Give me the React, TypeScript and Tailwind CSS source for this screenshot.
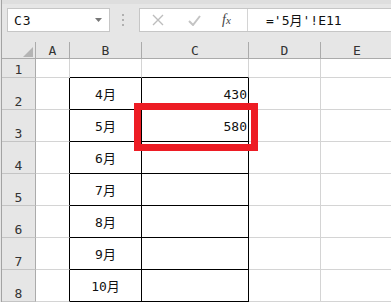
import React from "react";

const F = "font-['DejaVu_Sans_Mono','Noto_Sans_CJK_JP',monospace]";

const rows = [
  { n: "1", h: "h-[19px]", b: "", c: "" },
  { n: "2", h: "h-[32px]", b: "4月", c: "430" },
  { n: "3", h: "h-[32px]", b: "5月", c: "580" },
  { n: "4", h: "h-[32px]", b: "6月", c: "" },
  { n: "5", h: "h-[32px]", b: "7月", c: "" },
  { n: "6", h: "h-[32px]", b: "8月", c: "" },
  { n: "7", h: "h-[32px]", b: "9月", c: "" },
  { n: "8", h: "h-[32px]", b: "10月", c: "" },
];

export default function App() {
  return (
    <div className={`relative w-[391px] h-[302px] overflow-hidden bg-[#e6e6e6] pl-px ${F} text-[13px] text-[#111]`}>
      <div className="h-full border-l border-[#a3a3a3] flex flex-col">
        {/* toolbar */}
        <div className="h-[42px] shrink-0 border-t-[4px] border-[#dedede] flex items-start pt-[4px]">
          <div className="ml-[5px] w-[103px] h-[24px] border border-[#c6c6c6] bg-white flex items-center justify-between pl-[6px] pr-[7px]">
            <span className="leading-none tracking-[1px]">C3</span>
            <svg width="7" height="4" viewBox="0 0 7 4">
              <polygon points="0,0 7,0 3.5,4" fill="#777" />
            </svg>
          </div>
          <div className="ml-[12px] mt-[6px] flex flex-col gap-[3px]">
            <div className="w-[2px] h-[2px] bg-[#b0b0b0]" />
            <div className="w-[2px] h-[2px] bg-[#b0b0b0]" />
            <div className="w-[2px] h-[2px] bg-[#b0b0b0]" />
          </div>
          <div className="ml-[15px] flex-1 h-[24px] border border-r-0 border-[#c6c6c6] bg-white flex items-center">
            <div className="w-[107px] h-full flex items-center">
              <svg className="ml-[12px]" width="12" height="12" viewBox="0 0 12 12">
                <path d="M1 1 L11 11 M11 1 L1 11" stroke="#bdbdbd" strokeWidth="1.4" fill="none" />
              </svg>
              <svg className="ml-[24px]" width="13" height="11" viewBox="0 0 13 11">
                <path d="M1 6 L5 10 L12 1" stroke="#c4c4c4" strokeWidth="2" fill="none" />
              </svg>
              <span className="ml-[21px] font-['Liberation_Serif',serif] italic text-[14px] leading-none text-[#444]">
                f<span className="text-[11px]">x</span>
              </span>
            </div>
            <div className="w-px h-full bg-[#d4d4d4]" />
            <span className="pl-[18px] leading-none whitespace-nowrap">='5月'!E11</span>
          </div>
        </div>

        {/* header row */}
        <div className="flex h-[17px] shrink-0 border-b border-[#ababab] bg-[#e6e6e6] text-[#333]">
          <div className="relative w-[34px] shrink-0 border-r border-[#ababab]">
            <svg className="absolute right-[2px] bottom-[1px]" width="10" height="10" viewBox="0 0 10 10">
              <polygon points="0,10 10,10 10,0" fill="#b4b4b4" />
            </svg>
          </div>
          <div className="w-[34px] shrink-0 border-r border-[#ababab] flex items-center justify-center leading-none">A</div>
          <div className="w-[72px] shrink-0 border-r border-[#ababab] flex items-center justify-center leading-none">B</div>
          <div className="w-[107px] shrink-0 border-r border-[#ababab] flex items-center justify-center leading-none">C</div>
          <div className="w-[72px] shrink-0 border-r border-[#ababab] flex items-center justify-center leading-none">D</div>
          <div className="w-[72px] shrink-0 flex items-center justify-center leading-none">E</div>
        </div>

        {/* rows */}
        {rows.map((r, i) => {
          const first = i === 0;
          return (
            <div key={r.n} className={`flex ${r.h} shrink-0 bg-white`}>
              <div className="w-[34px] shrink-0 bg-[#e6e6e6] border-r border-b border-r-[#ababab] border-b-[#c4c4c4] flex items-end justify-center pb-[1px] text-[#333] leading-none">
                {r.n}
              </div>
              <div className={`w-[34px] shrink-0 border-b border-r border-b-[#d4d4d4] ${first ? "border-r-[#d4d4d4]" : "border-r-black"}`} />
              <div className={`w-[72px] shrink-0 border-b border-r flex items-center justify-center pt-[2px] leading-none ${first ? "border-b-black border-r-[#d4d4d4]" : "border-black"}`}>
                {r.b}
              </div>
              <div className={`w-[107px] shrink-0 border-b border-r flex items-center justify-end pt-[2px] pr-[1px] leading-none ${first ? "border-b-black border-r-[#d4d4d4]" : "border-black"}`}>
                {r.c}
              </div>
              <div className="w-[72px] shrink-0 border-b border-r border-[#d4d4d4]" />
              <div className="w-[72px] shrink-0 border-b border-[#d4d4d4]" />
            </div>
          );
        })}
      </div>

      {/* selection highlight */}
      <div className="absolute left-[134px] top-[103px] w-[124px] h-[48px] border-[7px] border-[#ed1c24]" />
    </div>
  );
}
